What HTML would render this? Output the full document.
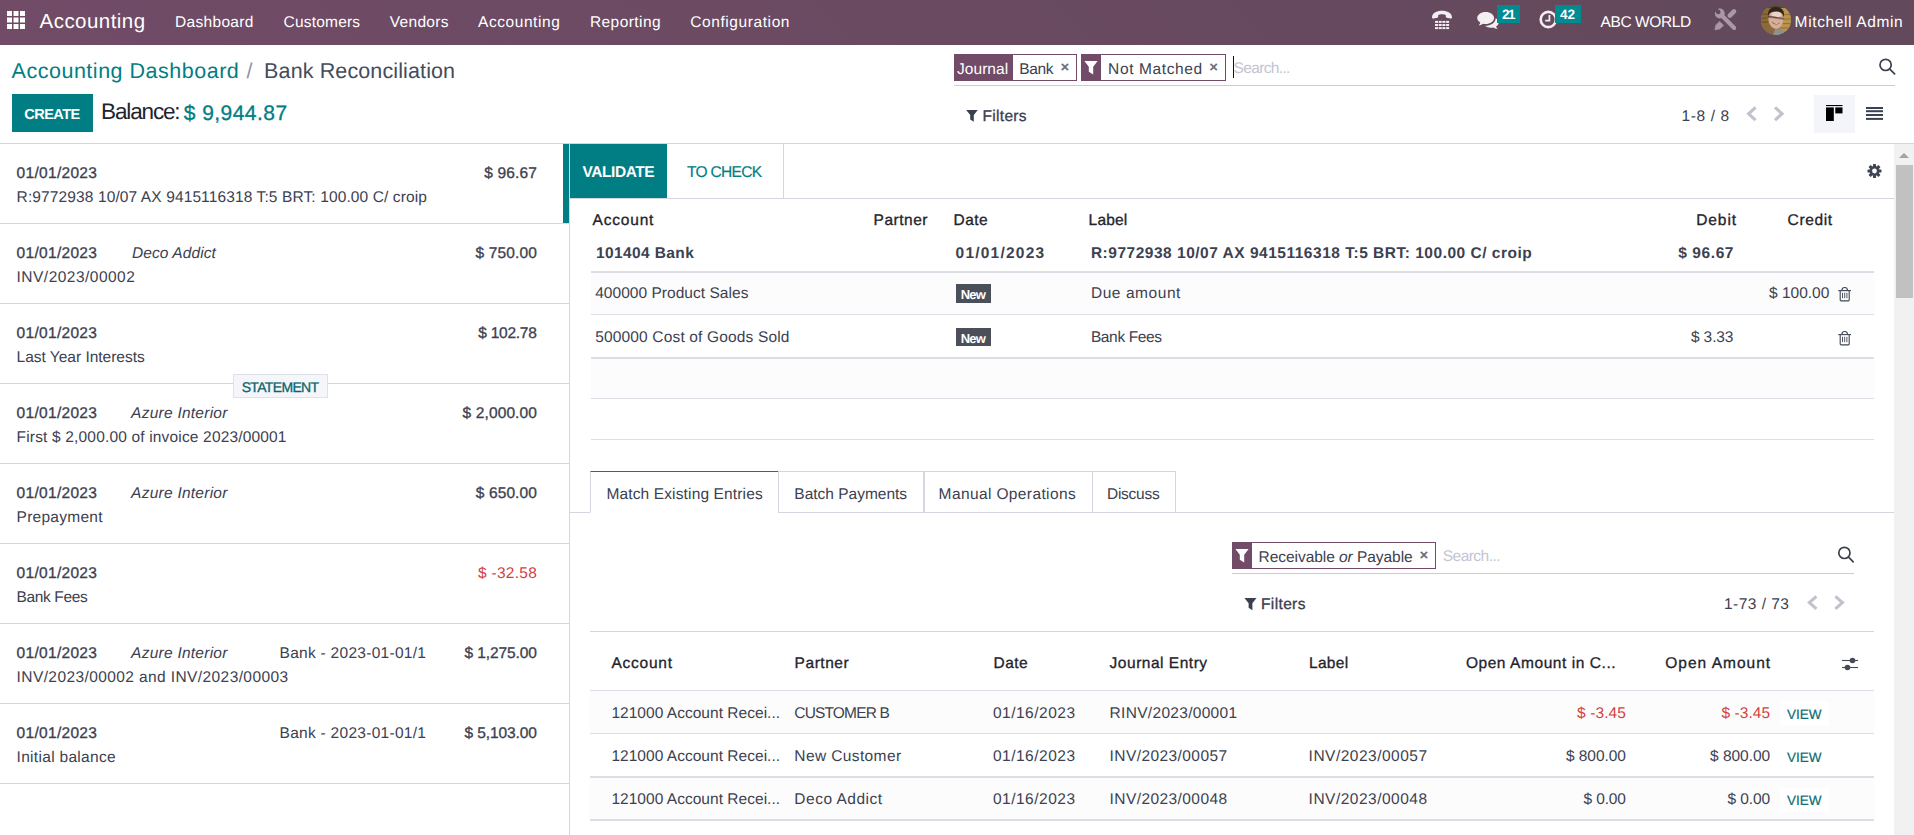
<!DOCTYPE html>
<html lang="en">
<head>
<meta charset="utf-8">
<title>Odoo - Bank Reconciliation</title>
<style>
*{box-sizing:border-box;margin:0;padding:0}
html,body{width:1914px;height:835px;overflow:hidden;background:#fff;font-family:"Liberation Sans",sans-serif;}
.abs,.t,.b{position:absolute}
.t{white-space:nowrap;display:block;text-rendering:geometricPrecision}
.t i{font-style:italic}
#page{position:relative;width:1914px;height:835px;overflow:hidden}
.hl{position:absolute;height:1px;background:#d5d7e0}
.vl{position:absolute;width:1px;background:#d5d7e0}
svg{position:absolute;overflow:visible}
</style>
</head>
<body>
<div id="page">
<!-- ===== navbar ===== -->
<div class="b" id="navbar" style="left:0;top:0;width:1914px;height:45px;background:linear-gradient(45deg,#714b67,#62495b)"></div>
<!--NAVICONS-->
<!-- ===== control panel ===== -->
<div class="b" style="left:12px;top:94px;width:81px;height:38px;background:#017e84"></div>
<!-- facets -->
<div class="b" style="left:954px;top:54px;width:123px;height:27px;border:1px solid #714b67;background:#fff"></div>
<div class="b" style="left:954px;top:54px;width:59px;height:27px;background:#714b67"></div>
<div class="b" style="left:1081px;top:54px;width:145px;height:27px;border:1px solid #714b67;background:#fff"></div>
<div class="b" style="left:1081px;top:54px;width:20px;height:27px;background:#714b67"></div>
<div class="b" style="left:1233px;top:56px;width:1px;height:22px;background:#111"></div>
<div class="hl" style="left:954px;top:85px;width:941px;background:#c9cbd6"></div>
<div class="b" style="left:1814px;top:95px;width:41px;height:38px;background:#f4f5fa"></div>
<!--CPICONS-->
<!-- ===== left list ===== -->
<div class="hl" style="left:0;top:143px;width:1914px"></div>
<div class="vl" style="left:569px;top:144px;height:691px"></div>
<div class="b" style="left:563px;top:144px;width:6px;height:79px;background:#017e84"></div>
<div class="hl" style="left:0;top:223px;width:569px"></div>
<div class="hl" style="left:0;top:303px;width:569px"></div>
<div class="hl" style="left:0;top:383px;width:569px"></div>
<div class="hl" style="left:0;top:463px;width:569px"></div>
<div class="hl" style="left:0;top:543px;width:569px"></div>
<div class="hl" style="left:0;top:623px;width:569px"></div>
<div class="hl" style="left:0;top:703px;width:569px"></div>
<div class="hl" style="left:0;top:783px;width:569px"></div>

<div class="b" style="left:233px;top:374px;width:95px;height:24px;background:#f5f6fa;border:1px solid #dfe1e8"></div>
<!-- ===== right panel top ===== -->
<div class="b" style="left:570px;top:144px;width:97px;height:54px;background:#017e84"></div>
<div class="vl" style="left:783px;top:144px;height:54px"></div>
<div class="hl" style="left:570px;top:198px;width:1324px"></div>
<div class="b" style="left:591px;top:271px;width:1283px;height:2px;background:#dcdee6"></div>
<div class="b" style="left:591px;top:273px;width:1283px;height:41px;background:#fcfcfc"></div>
<div class="hl" style="left:591px;top:314px;width:1283px;background:#dcdee6"></div>
<div class="b" style="left:591px;top:357px;width:1283px;height:2px;background:#dcdee6"></div>
<div class="b" style="left:591px;top:359px;width:1283px;height:39px;background:#fcfcfc"></div>
<div class="hl" style="left:591px;top:398px;width:1283px;background:#dcdee6"></div>
<div class="hl" style="left:591px;top:439px;width:1283px;background:#dcdee6"></div>
<div class="b" style="left:956px;top:284px;width:35px;height:19px;background:#4a4f5a"></div>
<div class="b" style="left:956px;top:328px;width:35px;height:18px;background:#4a4f5a"></div>
<!-- ===== tabs ===== -->
<div class="hl" style="left:570px;top:512px;width:1324px"></div>
<div class="b" style="left:590px;top:471px;width:189px;height:42px;background:#fff;border:1px solid #d5d7e0;border-top-color:#714b67;border-bottom-color:#fff"></div>
<div class="b" style="left:778px;top:471px;width:146px;height:42px;border:1px solid #d5d7e0"></div>
<div class="b" style="left:924px;top:471px;width:169px;height:42px;border:1px solid #d5d7e0"></div>
<div class="b" style="left:1092px;top:471px;width:84px;height:42px;border:1px solid #d5d7e0"></div>
<!-- ===== inner search ===== -->
<div class="b" style="left:1232px;top:542px;width:204px;height:27px;border:1px solid #714b67;background:#fff"></div>
<div class="b" style="left:1232px;top:542px;width:20px;height:27px;background:#714b67"></div>
<div class="hl" style="left:1232px;top:573px;width:622px;background:#c9cbd6"></div>
<!-- ===== table ===== -->
<div class="hl" style="left:590px;top:631px;width:1284px"></div>
<div class="hl" style="left:590px;top:690px;width:1284px;background:#dcdee6"></div>
<div class="b" style="left:590px;top:691px;width:1284px;height:42px;background:#fcfcfc"></div>
<div class="hl" style="left:590px;top:733px;width:1284px;background:#dcdee6"></div>
<div class="b" style="left:590px;top:776px;width:1284px;height:2px;background:#dcdee6"></div>
<div class="b" style="left:590px;top:778px;width:1284px;height:41px;background:#fcfcfc"></div>
<div class="b" style="left:590px;top:819px;width:1284px;height:2px;background:#dcdee6"></div>
<div class="b" style="left:1780px;top:702px;width:49px;height:24px;background:#fff"></div>
<div class="b" style="left:1780px;top:788px;width:49px;height:24px;background:#fff"></div>
<!-- ===== scrollbar ===== -->
<div class="b" style="left:1894px;top:144px;width:20px;height:691px;background:#f1f1f1"></div>
<div class="b" style="left:1896px;top:165px;width:17px;height:133px;background:#c1c1c1"></div>
<svg style="left:1899px;top:153px" width="10" height="5" viewBox="0 0 10 5"><path d="M0 5 L5 0 L10 5 Z" fill="#a3a3a3"/></svg>
<!--ICONS_START-->
<!-- apps grid -->
<svg style="left:7px;top:11px" width="18" height="18" viewBox="0 0 18 18" fill="#fff"><rect x="0" y="0" width="5" height="5"/><rect x="6.5" y="0" width="5" height="5"/><rect x="13" y="0" width="5" height="5"/><rect x="0" y="6.5" width="5" height="5"/><rect x="6.5" y="6.5" width="5" height="5"/><rect x="13" y="6.5" width="5" height="5"/><rect x="0" y="13" width="5" height="5"/><rect x="6.5" y="13" width="5" height="5"/><rect x="13" y="13" width="5" height="5"/></svg>
<!-- phone / voip -->
<svg style="left:1431px;top:10px" width="22" height="20" viewBox="0 0 22 20" fill="#f3eef2"><path d="M1 7.2 C1.2 3.2 5.5 .8 11 .8 C16.500 .8 20.800 3.200 21 7.200 C21 8.300 20.300 8.800 19.400 8.600 L15.800 7.700 C15 7.500 14.700 6.900 14.800 6.200 L14.900 5.200 C13.800 4.500 12.400 4.300 11 4.300 C9.600 4.300 8.200 4.500 7.100 5.200 L7.200 6.200 C7.300 6.900 7 7.500 6.200 7.700 L2.600 8.600 C1.700 8.800 1 8.300 1 7.200 Z"/><g><rect x="4" y="10.900" width="3" height="2"/><rect x="7.700" y="10.900" width="3" height="2"/><rect x="11.400" y="10.900" width="3" height="2"/><rect x="15.100" y="10.900" width="3" height="2"/><rect x="4" y="14" width="3" height="2"/><rect x="7.700" y="14" width="3" height="2"/><rect x="11.400" y="14" width="3" height="2"/><rect x="15.100" y="14" width="3" height="2"/><rect x="4" y="17.100" width="3" height="2"/><rect x="7.700" y="17.100" width="3" height="2"/><rect x="11.400" y="17.100" width="3" height="2"/><rect x="15.100" y="17.100" width="3" height="2"/></g></svg>
<!-- chat bubbles -->
<svg style="left:1477px;top:12px" width="22" height="17" viewBox="0 0 22 17" fill="#f3eef2"><path d="M8.600 0 C13.300 0 17.100 2.700 17.100 6 C17.100 9.300 13.300 12 8.600 12 C7.700 12 6.900 11.900 6.100 11.700 C5 12.500 3.500 13.200 1.700 13.300 C2.500 12.500 3.100 11.500 3.300 10.400 C1.400 9.300 .2 7.700 .2 6 C.2 2.700 4 0 8.600 0 Z"/><path d="M18.700 6.200 C20.500 7.200 21.700 8.700 21.700 10.400 C21.700 12 20.700 13.400 19.100 14.400 C19.300 15.300 19.800 16.100 20.600 16.800 C19 16.700 17.500 16.100 16.500 15.400 C15.700 15.600 14.900 15.700 14 15.700 C11.600 15.700 9.400 15 8 13.800 C13.700 13.900 18.600 10.700 18.700 6.200 Z"/></svg>
<div class="b" style="left:1497px;top:5px;width:23px;height:18px;background:#008b91"></div>
<!-- clock -->
<svg style="left:1539px;top:10px" width="19" height="19" viewBox="0 0 19 19" fill="none" stroke="#f3eef2"><circle cx="9.300" cy="9.500" r="7.600" stroke-width="2.600"/><path d="M10.400 5 V10.600 H6.200" stroke-width="1.800"/></svg>
<div class="b" style="left:1555px;top:5px;width:26px;height:18px;background:#008b91"></div>
<!-- tools -->
<svg style="left:1713px;top:8px" width="26" height="24" viewBox="0 0 26 24"><defs><mask id="wm"><rect width="26" height="24" fill="#fff"/><circle cx="5.300" cy="4" r="2.250" fill="#000"/><path d="M5.300 4 L-1 -2.600" stroke="#000" stroke-width="3.900"/></mask></defs><g fill="#a998a7" stroke="#a998a7" stroke-linecap="round"><path d="M21 3.400 L16.800 7.600" stroke-width="4.600" fill="none"/><path d="M6.700 13.500 L10.600 17.400 L6.600 21 L1.900 21.900 L2.800 17.200 Z" stroke-width=".6" stroke-linejoin="round"/><g mask="url(#wm)"><circle cx="6.800" cy="5.500" r="4.900" stroke="none"/><path d="M8 6.700 L21.200 19.900" stroke-width="4.200" fill="none"/></g></g></svg>
<!-- avatar -->
<svg style="left:1761px;top:5px" width="30" height="30" viewBox="0 0 30 30"><defs><clipPath id="av"><circle cx="15" cy="15" r="15"/></clipPath><filter id="bl" x="-10%" y="-10%" width="120%" height="120%"><feGaussianBlur stdDeviation=".75"/></filter></defs><g clip-path="url(#av)"><rect width="30" height="30" fill="#a5803f"/><g filter="url(#bl)"><rect x="-2" y="-2" width="12" height="34" fill="#8a6a34"/><rect x="20" y="-2" width="12" height="34" fill="#b8944e"/><rect x="-2" y="-2" width="34" height="5" fill="#5c4526"/><rect x="0" y="8.500" width="7" height="1.200" fill="#6e5329"/><rect x="0" y="12.500" width="6" height="1.200" fill="#6e5329"/><rect x="0" y="16.500" width="7" height="1.200" fill="#6e5329"/><rect x="22" y="9" width="8" height="1.100" fill="#94733a"/><rect x="22" y="13.500" width="8" height="1.100" fill="#94733a"/><rect x="21" y="18" width="9" height="1.100" fill="#94733a"/><rect x="20" y="22.500" width="9" height="1.100" fill="#94733a"/><path d="M4 30 C5 24 9 22 13 23 L18 30 Z" fill="#8d6647"/><path d="M12 30 L14 24.500 C18 24 23 25 26.500 28 L24 32 Z" fill="#8a9391"/><ellipse cx="14.800" cy="14.500" rx="7.300" ry="9.300" fill="#d7ad96" transform="rotate(-6 14.800 14.500)"/><ellipse cx="15.500" cy="9.500" rx="5" ry="3" fill="#ecd3c5"/><path d="M7 10.500 C6.500 3.500 12 1.500 16 2.200 C21 2.500 24 6 22.800 12 C22 8.500 20 6.800 16 6.600 C12 6.400 9 7 7 10.500 Z" fill="#2b2523"/><path d="M6.800 10.600 L13.500 11.400 L16 11.900 L22.500 13 L22.300 14.600 L16 13.600 L13.300 13.300 L6.800 12.400 Z" fill="#4d3d3a" opacity=".85"/><ellipse cx="10.600" cy="12.200" rx="2.300" ry="1" fill="#8f7469" opacity=".7"/><ellipse cx="19" cy="13.500" rx="2.300" ry="1" fill="#8f7469" opacity=".7"/><path d="M10.600 16.800 C13 18.300 16.500 18.600 18.800 17.600 C17.800 20.300 12.500 20.400 10.600 16.800 Z" fill="#7a4a42"/><path d="M11.600 17.300 C13.500 18.200 16.300 18.300 18 17.700 C17 19 13.300 19 11.600 17.300 Z" fill="#f4ece8"/></g></g></svg>
<!-- facet funnels (white on purple) -->
<svg style="left:1084px;top:61px" width="14" height="14" viewBox="0 0 14 14" fill="#fff"><path d="M.4 0 H13.600 L9.200 5.800 V13.600 L4.800 10.800 V5.800 Z"/></svg>
<svg style="left:1235px;top:549px" width="14" height="14" viewBox="0 0 14 14" fill="#fff"><path d="M.4 0 H13.600 L9.200 5.800 V13.600 L4.800 10.800 V5.800 Z"/></svg>
<!-- Filters funnels (dark) -->
<svg style="left:966px;top:110px" width="12" height="12" viewBox="0 0 12 12" fill="#3a4050"><path d="M.2 0 H11.800 L7.800 5 V11.800 L4.200 9.400 V5 Z"/></svg>
<svg style="left:1244px;top:597.500px" width="13" height="12.500" viewBox="0 0 12 12" fill="#3a4050"><path d="M.2 0 H11.800 L7.800 5 V11.800 L4.200 9.400 V5 Z"/></svg>
<!-- search icons -->
<svg style="left:1878px;top:57.500px" width="18" height="17" viewBox="0 0 18 17" fill="none" stroke="#3a4050" stroke-width="1.700" stroke-linecap="round"><circle cx="7.600" cy="6.900" r="5.600"/><path d="M11.800 11.200 L16.600 15.900"/></svg>
<svg style="left:1837px;top:545.500px" width="18" height="17" viewBox="0 0 18 17" fill="none" stroke="#3a4050" stroke-width="1.700" stroke-linecap="round"><circle cx="7.400" cy="6.900" r="5.600"/><path d="M11.600 11.200 L16.200 15.900"/></svg>
<!-- pager chevrons -->
<svg style="left:1746px;top:106px" width="40" height="16" viewBox="0 0 40 16" fill="none" stroke="#c0c2cc" stroke-width="3.100"><path d="M9.600 1.400 L2.600 7.800 L9.600 14.200"/><path d="M29 1.400 L36 7.800 L29 14.200"/></svg>
<svg style="left:1806px;top:595px" width="40" height="16" viewBox="0 0 40 16" fill="none" stroke="#c0c2cc" stroke-width="3.100"><path d="M10.400 1.400 L3.400 7.600 L10.400 13.800"/><path d="M29.400 1.400 L36.400 7.600 L29.400 13.800"/></svg>
<!-- kanban + list view icons -->
<svg style="left:1826px;top:105px" width="17" height="16" viewBox="0 0 17 16" fill="#000"><rect x="0" y="0" width="16.500" height="1.100"/><rect x="0" y="2.400" width="7.800" height="13.600"/><rect x="9.300" y="2.400" width="7.200" height="6"/></svg>
<svg style="left:1866px;top:107px" width="17" height="13" viewBox="0 0 17 13" fill="#3a4150"><rect x="0" y="0" width="17" height="2"/><rect x="0" y="3.200" width="17" height="2"/><rect x="0" y="7" width="17" height="2"/><rect x="0" y="10.900" width="17" height="2"/></svg>
<!-- gear -->
<svg style="left:1867px;top:164px" width="15" height="14" viewBox="-7.500 -7 15 14"><g fill="#3f4553"><circle r="4.900"/><g id="tooth"><rect x="-1.500" y="-7" width="3" height="14" rx=".5"/></g><rect x="-1.500" y="-7" width="3" height="14" rx=".5" transform="rotate(45)"/><rect x="-1.500" y="-7" width="3" height="14" rx=".5" transform="rotate(90)"/><rect x="-1.500" y="-7" width="3" height="14" rx=".5" transform="rotate(135)"/></g><circle r="2.400" fill="#fff"/></svg>
<!-- trash icons -->
<svg style="left:1838px;top:287px" width="14" height="15" viewBox="0 0 14 15" fill="none" stroke="#3f4553" stroke-width="1.100"><path d="M.3 3.600 H13"/><path d="M3.800 3.400 C4 1 5.400 .5 6.700 .5 C8 .5 9.400 1 9.600 3.400"/><path d="M2.200 3.700 V13 Q2.200 13.900 3.100 13.900 H10.300 Q11.200 13.900 11.200 13 V3.700"/><path d="M4.500 5.800 V11.200 M6.700 5.800 V11.200 M8.900 5.800 V11.200" stroke-width=".9"/></svg>
<svg style="left:1838px;top:330.500px" width="14" height="15" viewBox="0 0 14 15" fill="none" stroke="#3f4553" stroke-width="1.100"><path d="M.3 3.600 H13"/><path d="M3.800 3.400 C4 1 5.400 .5 6.700 .5 C8 .5 9.400 1 9.600 3.400"/><path d="M2.200 3.700 V13 Q2.200 13.900 3.100 13.900 H10.300 Q11.200 13.900 11.200 13 V3.700"/><path d="M4.500 5.800 V11.200 M6.700 5.800 V11.200 M8.900 5.800 V11.200" stroke-width=".9"/></svg>
<!-- sliders (optional columns) -->
<svg style="left:1841px;top:656px" width="18" height="16" viewBox="0 0 18 16"><g stroke="#444a57" stroke-width="1.100"><path d="M1 4.500 H17"/><path d="M1 11.500 H17"/></g><circle cx="11.500" cy="4.500" r="2.800" fill="#444a57"/><circle cx="6.500" cy="11.500" r="2.800" fill="#444a57"/></svg>
<!--ICONS_END-->
<nav aria-label="Main navigation">
<span class="t" style="top:7.65px;font-size:20.5px;line-height:28.5px;color:#ffffff;letter-spacing:0.451px;left:39.60px;">Accounting</span>
<span class="t" style="top:10.75px;font-size:15.5px;line-height:23.5px;color:#ffffff;letter-spacing:0.309px;left:175.10px;">Dashboard</span>
<span class="t" style="top:10.75px;font-size:15.5px;line-height:23.5px;color:#ffffff;letter-spacing:0.208px;left:283.50px;">Customers</span>
<span class="t" style="top:10.75px;font-size:15.5px;line-height:23.5px;color:#ffffff;letter-spacing:0.285px;left:389.80px;">Vendors</span>
<span class="t" style="top:10.75px;font-size:15.5px;line-height:23.5px;color:#ffffff;letter-spacing:0.566px;left:478.00px;">Accounting</span>
<span class="t" style="top:10.75px;font-size:15.5px;line-height:23.5px;color:#ffffff;letter-spacing:0.435px;left:589.90px;">Reporting</span>
<span class="t" style="top:10.75px;font-size:15.5px;line-height:23.5px;color:#ffffff;letter-spacing:0.591px;left:690.20px;">Configuration</span>
<span class="t" style="top:4.15px;font-size:13.5px;line-height:21.5px;color:#ffffff;font-weight:700;letter-spacing:-1.331px;left:1501.90px;">21</span>
<span class="t" style="top:4.15px;font-size:13.5px;line-height:21.5px;color:#ffffff;font-weight:700;letter-spacing:-0.131px;left:1560.00px;">42</span>
<span class="t" style="top:10.55px;font-size:15.5px;line-height:23.5px;color:#ffffff;letter-spacing:-0.422px;left:1600.60px;">ABC WORLD</span>
<span class="t" style="top:10.55px;font-size:15.5px;line-height:23.5px;color:#ffffff;letter-spacing:0.628px;left:1794.60px;">Mitchell Admin</span>
</nav>
<header aria-label="Control panel">
<span class="t" style="top:57.05px;font-size:21.5px;line-height:29.5px;color:#017e84;letter-spacing:0.509px;left:11.60px;">Accounting Dashboard</span>
<span class="t" style="top:57.05px;font-size:21.5px;line-height:29.5px;color:#8f95a2;letter-spacing:0.516px;left:246.60px;">/</span>
<span class="t" style="top:57.05px;font-size:21.5px;line-height:29.5px;color:#444b5a;letter-spacing:0.120px;left:264.10px;">Bank Reconciliation</span>
<span class="t" style="top:104.15px;font-size:14.5px;line-height:22.5px;color:#ffffff;font-weight:700;letter-spacing:-0.489px;left:24.20px;">CREATE</span>
<span class="t" style="top:97.15px;font-size:22.5px;line-height:30.5px;color:#1f242d;letter-spacing:-1.152px;left:101.10px;">Balance:</span>
<span class="t" style="top:98.90px;font-size:21px;line-height:29px;color:#017e84;-webkit-text-stroke:0.32px currentColor;letter-spacing:0.448px;left:183.80px;">$ 9,944.87</span>
<span class="t" style="top:57.55px;font-size:15.5px;line-height:23.5px;color:#ffffff;letter-spacing:0.026px;left:957.10px;">Journal</span>
<span class="t" style="top:57.55px;font-size:15.5px;line-height:23.5px;color:#3c4150;letter-spacing:-0.381px;left:1019.30px;">Bank</span>
<span class="t" style="top:56.30px;font-size:15px;line-height:23px;color:#6b7080;font-weight:700;letter-spacing:-0.266px;left:1060.60px;">×</span>
<span class="t" style="top:57.55px;font-size:15.5px;line-height:23.5px;color:#3c4150;letter-spacing:0.611px;left:1108.10px;">Not Matched</span>
<span class="t" style="top:56.30px;font-size:15px;line-height:23px;color:#6b7080;font-weight:700;letter-spacing:0.134px;left:1209.20px;">×</span>
<span class="t" style="top:56.55px;font-size:15.5px;line-height:23.5px;color:#c3c5d2;letter-spacing:-0.654px;left:1233.60px;">Search...</span>
<span class="t" style="top:104.85px;font-size:15.5px;line-height:23.5px;color:#3a4050;-webkit-text-stroke:0.32px currentColor;letter-spacing:0.299px;left:982.60px;">Filters</span>
<span class="t" style="top:104.85px;font-size:15.5px;line-height:23.5px;color:#3c4150;letter-spacing:0.591px;left:1681.60px;">1-8 / 8</span>
</header>
<aside aria-label="Statement lines">
<span class="t" style="top:161.85px;font-size:15.5px;line-height:23.5px;color:#3c4150;-webkit-text-stroke:0.32px currentColor;letter-spacing:0.302px;left:16.60px;">01/01/2023</span>
<span class="t" style="top:161.85px;font-size:15.5px;line-height:23.5px;color:#3c4150;-webkit-text-stroke:0.32px currentColor;letter-spacing:0.147px;left:484.30px;">$ 96.67</span>
<span class="t" style="top:186.05px;font-size:15.5px;line-height:23.5px;color:#3c4150;letter-spacing:0.116px;left:16.60px;">R:9772938 10/07 AX 9415116318 T:5 BRT: 100.00 C/ croip</span>
<span class="t" style="top:241.85px;font-size:15.5px;line-height:23.5px;color:#3c4150;-webkit-text-stroke:0.32px currentColor;letter-spacing:0.302px;left:16.60px;">01/01/2023</span>
<span class="t" style="top:241.85px;font-size:15.5px;line-height:23.5px;color:#3c4150;font-style:italic;letter-spacing:0.080px;left:132.00px;">Deco Addict</span>
<span class="t" style="top:241.85px;font-size:15.5px;line-height:23.5px;color:#3c4150;-webkit-text-stroke:0.32px currentColor;letter-spacing:0.137px;left:475.60px;">$ 750.00</span>
<span class="t" style="top:266.05px;font-size:15.5px;line-height:23.5px;color:#3c4150;letter-spacing:0.473px;left:16.60px;">INV/2023/00002</span>
<span class="t" style="top:321.85px;font-size:15.5px;line-height:23.5px;color:#3c4150;-webkit-text-stroke:0.32px currentColor;letter-spacing:0.302px;left:16.60px;">01/01/2023</span>
<span class="t" style="top:321.85px;font-size:15.5px;line-height:23.5px;color:#3c4150;-webkit-text-stroke:0.32px currentColor;letter-spacing:-0.235px;left:478.20px;">$ 102.78</span>
<span class="t" style="top:346.05px;font-size:15.5px;line-height:23.5px;color:#3c4150;letter-spacing:-0.016px;left:16.60px;">Last Year Interests</span>
<span class="t" style="top:401.85px;font-size:15.5px;line-height:23.5px;color:#3c4150;-webkit-text-stroke:0.32px currentColor;letter-spacing:0.302px;left:16.60px;">01/01/2023</span>
<span class="t" style="top:401.85px;font-size:15.5px;line-height:23.5px;color:#3c4150;font-style:italic;letter-spacing:0.250px;left:131.10px;">Azure Interior</span>
<span class="t" style="top:401.85px;font-size:15.5px;line-height:23.5px;color:#3c4150;-webkit-text-stroke:0.32px currentColor;letter-spacing:0.115px;left:462.60px;">$ 2,000.00</span>
<span class="t" style="top:426.05px;font-size:15.5px;line-height:23.5px;color:#3c4150;letter-spacing:0.168px;left:16.60px;">First $ 2,000.00 of invoice 2023/00001</span>
<span class="t" style="top:481.85px;font-size:15.5px;line-height:23.5px;color:#3c4150;-webkit-text-stroke:0.32px currentColor;letter-spacing:0.302px;left:16.60px;">01/01/2023</span>
<span class="t" style="top:481.85px;font-size:15.5px;line-height:23.5px;color:#3c4150;font-style:italic;letter-spacing:0.250px;left:131.10px;">Azure Interior</span>
<span class="t" style="top:481.85px;font-size:15.5px;line-height:23.5px;color:#3c4150;-webkit-text-stroke:0.32px currentColor;letter-spacing:0.108px;left:475.80px;">$ 650.00</span>
<span class="t" style="top:506.05px;font-size:15.5px;line-height:23.5px;color:#3c4150;letter-spacing:0.258px;left:16.60px;">Prepayment</span>
<span class="t" style="top:561.85px;font-size:15.5px;line-height:23.5px;color:#3c4150;-webkit-text-stroke:0.32px currentColor;letter-spacing:0.302px;left:16.60px;">01/01/2023</span>
<span class="t" style="top:561.85px;font-size:15.5px;line-height:23.5px;color:#d5403f;letter-spacing:0.287px;left:478.00px;">$ -32.58</span>
<span class="t" style="top:586.05px;font-size:15.5px;line-height:23.5px;color:#3c4150;letter-spacing:-0.376px;left:16.60px;">Bank Fees</span>
<span class="t" style="top:641.85px;font-size:15.5px;line-height:23.5px;color:#3c4150;-webkit-text-stroke:0.32px currentColor;letter-spacing:0.302px;left:16.60px;">01/01/2023</span>
<span class="t" style="top:641.85px;font-size:15.5px;line-height:23.5px;color:#3c4150;font-style:italic;letter-spacing:0.250px;left:131.10px;">Azure Interior</span>
<span class="t" style="top:641.85px;font-size:15.5px;line-height:23.5px;color:#3c4150;letter-spacing:0.287px;left:279.50px;">Bank - 2023-01-01/1</span>
<span class="t" style="top:641.85px;font-size:15.5px;line-height:23.5px;color:#3c4150;-webkit-text-stroke:0.32px currentColor;letter-spacing:-0.107px;left:464.60px;">$ 1,275.00</span>
<span class="t" style="top:666.05px;font-size:15.5px;line-height:23.5px;color:#3c4150;letter-spacing:0.405px;left:16.60px;">INV/2023/00002 and INV/2023/00003</span>
<span class="t" style="top:721.85px;font-size:15.5px;line-height:23.5px;color:#3c4150;-webkit-text-stroke:0.32px currentColor;letter-spacing:0.302px;left:16.60px;">01/01/2023</span>
<span class="t" style="top:721.85px;font-size:15.5px;line-height:23.5px;color:#3c4150;letter-spacing:0.287px;left:279.50px;">Bank - 2023-01-01/1</span>
<span class="t" style="top:721.85px;font-size:15.5px;line-height:23.5px;color:#3c4150;-webkit-text-stroke:0.32px currentColor;letter-spacing:-0.107px;left:464.60px;">$ 5,103.00</span>
<span class="t" style="top:746.05px;font-size:15.5px;line-height:23.5px;color:#3c4150;letter-spacing:0.300px;left:16.60px;">Initial balance</span>
<span class="t" style="top:376.10px;font-size:14px;line-height:22px;color:#06666e;-webkit-text-stroke:0.32px currentColor;letter-spacing:-0.663px;left:241.70px;">STATEMENT</span>
</aside>
<main aria-label="Reconciliation form">
<span class="t" style="top:160.65px;font-size:15.5px;line-height:23.5px;color:#ffffff;font-weight:700;letter-spacing:-0.458px;left:582.60px;">VALIDATE</span>
<span class="t" style="top:160.65px;font-size:15.5px;line-height:23.5px;color:#017e84;-webkit-text-stroke:0.2px currentColor;letter-spacing:-0.673px;left:687.00px;">TO CHECK</span>
<span class="t" style="top:209.05px;font-size:15.5px;line-height:23.5px;color:#1f242d;-webkit-text-stroke:0.32px currentColor;letter-spacing:0.797px;left:592.60px;">Account</span>
<span class="t" style="top:209.05px;font-size:15.5px;line-height:23.5px;color:#1f242d;-webkit-text-stroke:0.32px currentColor;letter-spacing:0.509px;left:873.60px;">Partner</span>
<span class="t" style="top:209.05px;font-size:15.5px;line-height:23.5px;color:#1f242d;-webkit-text-stroke:0.32px currentColor;letter-spacing:0.450px;left:953.60px;">Date</span>
<span class="t" style="top:209.05px;font-size:15.5px;line-height:23.5px;color:#1f242d;-webkit-text-stroke:0.32px currentColor;letter-spacing:0.191px;left:1088.60px;">Label</span>
<span class="t" style="top:209.05px;font-size:15.5px;line-height:23.5px;color:#1f242d;-webkit-text-stroke:0.32px currentColor;letter-spacing:0.928px;left:1696.20px;">Debit</span>
<span class="t" style="top:209.05px;font-size:15.5px;line-height:23.5px;color:#1f242d;-webkit-text-stroke:0.32px currentColor;letter-spacing:0.628px;left:1787.60px;">Credit</span>
<span class="t" style="top:241.85px;font-size:15.5px;line-height:23.5px;color:#3c4150;font-weight:700;letter-spacing:0.386px;left:596.00px;">101404 Bank</span>
<span class="t" style="top:241.85px;font-size:15.5px;line-height:23.5px;color:#3c4150;font-weight:700;letter-spacing:1.214px;left:955.60px;">01/01/2023</span>
<span class="t" style="top:241.85px;font-size:15.5px;line-height:23.5px;color:#3c4150;font-weight:700;letter-spacing:0.510px;left:1090.90px;">R:9772938 10/07 AX 9415116318 T:5 BRT: 100.00 C/ croip</span>
<span class="t" style="top:241.85px;font-size:15.5px;line-height:23.5px;color:#3c4150;font-weight:700;letter-spacing:0.597px;left:1678.20px;">$ 96.67</span>
<span class="t" style="top:281.85px;font-size:15.5px;line-height:23.5px;color:#3c4150;letter-spacing:0.035px;left:595.20px;">400000 Product Sales</span>
<span class="t" style="top:284.00px;font-size:13px;line-height:21px;color:#ffffff;font-weight:700;letter-spacing:-0.817px;left:960.80px;">New</span>
<span class="t" style="top:281.85px;font-size:15.5px;line-height:23.5px;color:#3c4150;letter-spacing:0.561px;left:1090.90px;">Due amount</span>
<span class="t" style="top:281.85px;font-size:15.5px;line-height:23.5px;color:#3c4150;letter-spacing:-0.021px;left:1769.10px;">$ 100.00</span>
<span class="t" style="top:325.65px;font-size:15.5px;line-height:23.5px;color:#3c4150;letter-spacing:0.161px;left:595.20px;">500000 Cost of Goods Sold</span>
<span class="t" style="top:327.90px;font-size:13px;line-height:21px;color:#ffffff;font-weight:700;letter-spacing:-0.817px;left:960.80px;">New</span>
<span class="t" style="top:325.65px;font-size:15.5px;line-height:23.5px;color:#3c4150;letter-spacing:-0.364px;left:1090.90px;">Bank Fees</span>
<span class="t" style="top:325.65px;font-size:15.5px;line-height:23.5px;color:#3c4150;letter-spacing:-0.102px;left:1690.90px;">$ 3.33</span>
<span class="t" style="top:482.85px;font-size:15.5px;line-height:23.5px;color:#3c4150;letter-spacing:0.141px;left:606.40px;">Match Existing Entries</span>
<span class="t" style="top:482.85px;font-size:15.5px;line-height:23.5px;color:#3c4150;letter-spacing:-0.005px;left:794.30px;">Batch Payments</span>
<span class="t" style="top:482.85px;font-size:15.5px;line-height:23.5px;color:#3c4150;letter-spacing:0.383px;left:938.60px;">Manual Operations</span>
<span class="t" style="top:482.85px;font-size:15.5px;line-height:23.5px;color:#3c4150;letter-spacing:-0.261px;left:1107.00px;">Discuss</span>
<span class="t" style="top:545.95px;font-size:15.5px;line-height:23.5px;color:#3c4150;letter-spacing:-0.051px;left:1258.60px;">Receivable <i>or</i> Payable</span>
<span class="t" style="top:544.30px;font-size:15px;line-height:23px;color:#6b7080;font-weight:700;letter-spacing:-0.266px;left:1419.60px;">×</span>
<span class="t" style="top:545.45px;font-size:15.5px;line-height:23.5px;color:#c3c5d2;letter-spacing:-0.541px;left:1442.80px;">Search...</span>
<span class="t" style="top:592.85px;font-size:15.5px;line-height:23.5px;color:#3a4050;-webkit-text-stroke:0.32px currentColor;letter-spacing:0.366px;left:1261.00px;">Filters</span>
<span class="t" style="top:592.85px;font-size:15.5px;line-height:23.5px;color:#3c4150;letter-spacing:0.464px;left:1724.00px;">1-73 / 73</span>
<span class="t" style="top:651.85px;font-size:15.5px;line-height:23.5px;color:#1f242d;-webkit-text-stroke:0.32px currentColor;letter-spacing:0.781px;left:611.40px;">Account</span>
<span class="t" style="top:651.85px;font-size:15.5px;line-height:23.5px;color:#1f242d;-webkit-text-stroke:0.32px currentColor;letter-spacing:0.543px;left:794.60px;">Partner</span>
<span class="t" style="top:651.85px;font-size:15.5px;line-height:23.5px;color:#1f242d;-webkit-text-stroke:0.32px currentColor;letter-spacing:0.417px;left:993.60px;">Date</span>
<span class="t" style="top:651.85px;font-size:15.5px;line-height:23.5px;color:#1f242d;-webkit-text-stroke:0.32px currentColor;letter-spacing:0.514px;left:1109.60px;">Journal Entry</span>
<span class="t" style="top:651.85px;font-size:15.5px;line-height:23.5px;color:#1f242d;-webkit-text-stroke:0.32px currentColor;letter-spacing:0.266px;left:1309.10px;">Label</span>
<span class="t" style="top:651.85px;font-size:15.5px;line-height:23.5px;color:#1f242d;-webkit-text-stroke:0.32px currentColor;letter-spacing:0.562px;left:1465.90px;">Open Amount in C...</span>
<span class="t" style="top:651.85px;font-size:15.5px;line-height:23.5px;color:#1f242d;-webkit-text-stroke:0.32px currentColor;letter-spacing:1.000px;left:1665.30px;">Open Amount</span>
<span class="t" style="top:701.85px;font-size:15.5px;line-height:23.5px;color:#3c4150;letter-spacing:0.030px;left:611.40px;">121000 Account Recei...</span>
<span class="t" style="top:701.85px;font-size:15.5px;line-height:23.5px;color:#3c4150;letter-spacing:-0.840px;left:794.30px;">CUSTOMER B</span>
<span class="t" style="top:701.85px;font-size:15.5px;line-height:23.5px;color:#3c4150;letter-spacing:0.514px;left:992.90px;">01/16/2023</span>
<span class="t" style="top:701.85px;font-size:15.5px;line-height:23.5px;color:#3c4150;letter-spacing:0.305px;left:1109.60px;">RINV/2023/00001</span>
<span class="t" style="top:701.85px;font-size:15.5px;line-height:23.5px;color:#d5403f;letter-spacing:0.106px;left:1577.00px;">$ -3.45</span>
<span class="t" style="top:701.85px;font-size:15.5px;line-height:23.5px;color:#d5403f;letter-spacing:0.072px;left:1721.40px;">$ -3.45</span>
<span class="t" style="top:704.05px;font-size:13.5px;line-height:21.5px;color:#0b6d73;-webkit-text-stroke:0.2px currentColor;letter-spacing:-0.039px;left:1787.00px;">VIEW</span>
<span class="t" style="top:744.85px;font-size:15.5px;line-height:23.5px;color:#3c4150;letter-spacing:0.030px;left:611.40px;">121000 Account Recei...</span>
<span class="t" style="top:744.85px;font-size:15.5px;line-height:23.5px;color:#3c4150;letter-spacing:0.391px;left:794.30px;">New Customer</span>
<span class="t" style="top:744.85px;font-size:15.5px;line-height:23.5px;color:#3c4150;letter-spacing:0.514px;left:992.90px;">01/16/2023</span>
<span class="t" style="top:744.85px;font-size:15.5px;line-height:23.5px;color:#3c4150;letter-spacing:0.419px;left:1109.60px;">INV/2023/00057</span>
<span class="t" style="top:744.85px;font-size:15.5px;line-height:23.5px;color:#3c4150;letter-spacing:0.496px;left:1308.60px;">INV/2023/00057</span>
<span class="t" style="top:744.85px;font-size:15.5px;line-height:23.5px;color:#3c4150;letter-spacing:-0.063px;left:1566.00px;">$ 800.00</span>
<span class="t" style="top:744.85px;font-size:15.5px;line-height:23.5px;color:#3c4150;letter-spacing:-0.049px;left:1710.10px;">$ 800.00</span>
<span class="t" style="top:747.05px;font-size:13.5px;line-height:21.5px;color:#0b6d73;-webkit-text-stroke:0.2px currentColor;letter-spacing:-0.039px;left:1787.00px;">VIEW</span>
<span class="t" style="top:787.85px;font-size:15.5px;line-height:23.5px;color:#3c4150;letter-spacing:0.030px;left:611.40px;">121000 Account Recei...</span>
<span class="t" style="top:787.85px;font-size:15.5px;line-height:23.5px;color:#3c4150;letter-spacing:0.508px;left:794.30px;">Deco Addict</span>
<span class="t" style="top:787.85px;font-size:15.5px;line-height:23.5px;color:#3c4150;letter-spacing:0.514px;left:992.90px;">01/16/2023</span>
<span class="t" style="top:787.85px;font-size:15.5px;line-height:23.5px;color:#3c4150;letter-spacing:0.419px;left:1109.60px;">INV/2023/00048</span>
<span class="t" style="top:787.85px;font-size:15.5px;line-height:23.5px;color:#3c4150;letter-spacing:0.496px;left:1308.60px;">INV/2023/00048</span>
<span class="t" style="top:787.85px;font-size:15.5px;line-height:23.5px;color:#3c4150;letter-spacing:-0.162px;left:1583.60px;">$ 0.00</span>
<span class="t" style="top:787.85px;font-size:15.5px;line-height:23.5px;color:#3c4150;letter-spacing:-0.122px;left:1727.60px;">$ 0.00</span>
<span class="t" style="top:790.05px;font-size:13.5px;line-height:21.5px;color:#0b6d73;-webkit-text-stroke:0.2px currentColor;letter-spacing:-0.039px;left:1787.00px;">VIEW</span>
</main>
</div>
</body>
</html>
